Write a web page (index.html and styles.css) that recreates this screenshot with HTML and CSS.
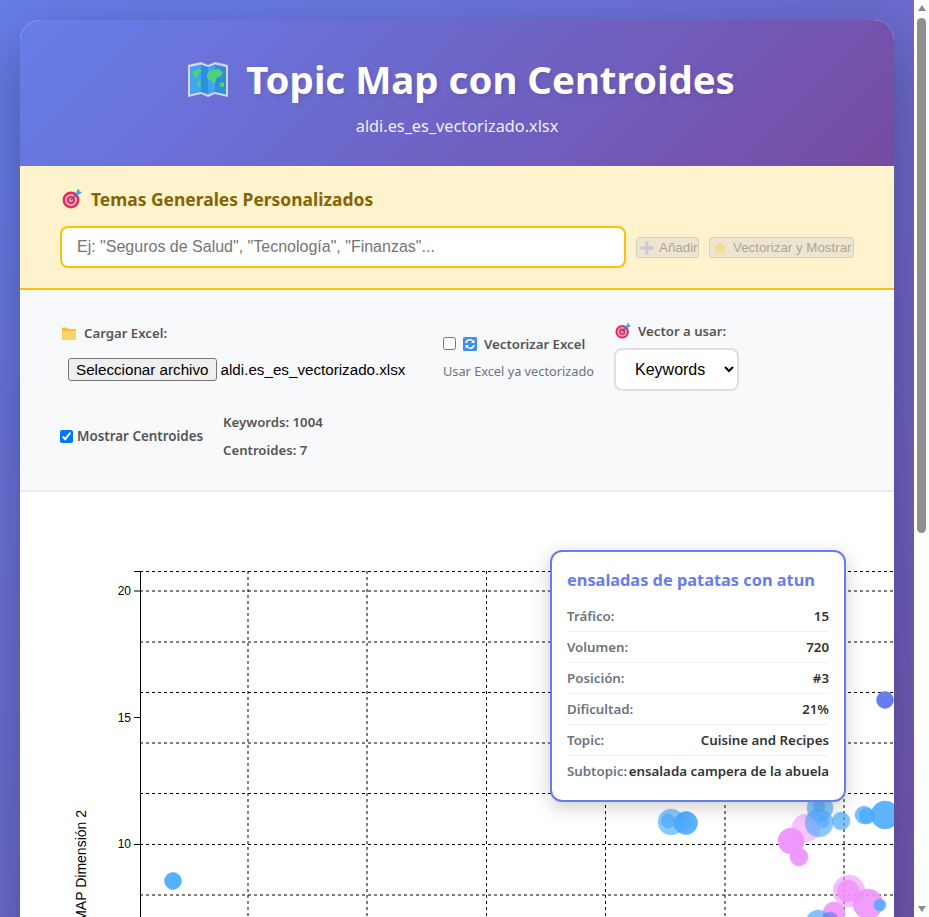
FILE: index.html
```html
<!DOCTYPE html>
<html lang="es">
<head>
  <meta charset="UTF-8">
  <meta name="viewport" content="width=device-width, initial-scale=1.0">
  <title>Topic Map con Centroides</title>
  <link rel="stylesheet" href="styles.css">
</head>
<body>
  <svg class="defs" width="0" height="0" aria-hidden="true">
    <symbol id="ico-target" viewBox="0 0 20 20">
      <circle cx="9" cy="11" r="8.5" fill="#dd2e62"/>
      <circle cx="9" cy="11" r="6" fill="#f4a6bd"/>
      <circle cx="9" cy="11" r="4" fill="#dd2e62"/>
      <circle cx="9" cy="11" r="2" fill="#f4a6bd"/>
      <path d="M9 11 L16 4" stroke="#3b6fb5" stroke-width="1.6"/>
      <path d="M14 5 L15 1 L17 0 L17.5 2.5 L20 3 L18 5 L15 6 Z" fill="#3ea6ee"/>
    </symbol>
  </svg>

  <div class="shell">
    <div class="page">
      <div class="container">
        <header class="header">
          <h1 class="title">
            <svg class="title-ico" viewBox="0 0 42 37" aria-hidden="true">
              <path d="M1 4 L14 1 L21 4 L28 1 L41 4 L41 36 L28 33 L21 36 L14 33 L1 36 Z" fill="#d9d3e6"/>
              <path d="M3 6 L14 3.500 L14 31 L3 33.500 Z" fill="#42a5f0"/>
              <path d="M14 3.500 L21 6 L21 33.500 L14 31 Z" fill="#2f8fdc"/>
              <path d="M21 6 L28 3.500 L28 31 L21 33.500 Z" fill="#42a5f0"/>
              <path d="M28 3.500 L39 6 L39 33.500 L28 31 Z" fill="#2f8fdc"/>
              <path d="M5 11 L12 8 L15 10 L11 13 L11 17 L8 16 L6 14 Z M11 19 L14 21 L13 26 L11 25 Z" fill="#4fd07f"/>
              <path d="M20 13 L24 9 L32 8 L36 12 L33 16 L30 16 L29 20 L26 23 L24 19 L20 18 Z M33 22 L37 21 L37 26 L33 26 Z" fill="#4fd07f"/>
            </svg>
            <span>Topic Map con Centroides</span>
          </h1>
          <p class="subtitle">aldi.es_es_vectorizado.xlsx</p>
        </header>

        <section class="topics">
          <h3 class="topics-title"><svg class="ico-20"><use href="#ico-target"/></svg>Temas Generales Personalizados</h3>
          <div class="topics-row">
            <input class="topics-input" type="text" placeholder="Ej: &quot;Seguros de Salud&quot;, &quot;Tecnología&quot;, &quot;Finanzas&quot;...">
            <button class="btn-off btn-add" disabled>
              <svg class="btn-ico" viewBox="0 0 14 14" aria-hidden="true"><path d="M5.500 0.500 H8.500 V5.500 H13.500 V8.500 H8.500 V13.500 H5.500 V8.500 H0.500 V5.500 H5.500 Z" fill="#d3c3dc"/></svg>
              Añadir
            </button>
            <button class="btn-off btn-vec" disabled>
              <svg class="btn-ico" viewBox="0 0 14 14" aria-hidden="true"><path d="M7 0.500 L9 4.800 L13.800 5.400 L10.200 8.600 L11.200 13.500 L7 11 L2.800 13.500 L3.800 8.600 L0.200 5.400 L5 4.800 Z" fill="#f0dc98" stroke="#f0dc98" stroke-linejoin="round"/></svg>
              Vectorizar y Mostrar
            </button>
          </div>
        </section>

        <section class="controls">
          <div class="controls-row">
            <div class="group group-file">
              <label class="lbl">
                <svg class="ico-folder" viewBox="0 0 14 13" aria-hidden="true">
                  <path d="M0 1.500 Q0 0.500 1 0.500 H5 L6.500 2 H13 Q14 2 14 3 V12 Q14 13 13 13 H1 Q0 13 0 12 Z" fill="#fbc02d"/>
                  <path d="M0 4 H14 V12 Q14 13 13 13 H1 Q0 13 0 12 Z" fill="#ffd26a"/>
                </svg>Cargar Excel:
              </label>
              <div class="file-field">
                <button class="file-btn" type="button">Seleccionar archivo</button>
                <span class="file-name">aldi.es_es_vectorizado.xlsx</span>
              </div>
            </div>

            <div class="group group-vec">
              <label class="lbl">
                <input class="vec-check" type="checkbox">
                <svg class="ico-sync" viewBox="0 0 14 14" aria-hidden="true">
                  <rect width="14" height="14" rx="1.500" fill="#3f8fe8"/>
                  <path d="M3 6 A4 4 0 0 1 10.500 5 M11 8 A4 4 0 0 1 3.500 9" fill="none" stroke="#fff" stroke-width="1.600"/>
                  <path d="M11.500 2.500 V6 H8 Z M2.500 11.500 V8 H6 Z" fill="#fff"/>
                </svg>Vectorizar Excel
              </label>
              <small class="hint">Usar Excel ya vectorizado</small>
            </div>

            <div class="group group-vector">
              <label class="lbl"><svg class="ico-16"><use href="#ico-target"/></svg>Vector a usar:</label>
              <select class="vector-select">
                <option>Keywords</option>
              </select>
            </div>
          </div>

          <div class="controls-row controls-row-b">
            <label class="lbl lbl-centroids"><input class="cent-check" type="checkbox" checked>Mostrar Centroides</label>
            <div class="stats">
              <span>Keywords: 1004</span>
              <span>Centroides: 7</span>
            </div>
          </div>
        </section>

        <section class="chart">
          <svg class="chart-svg" width="874" height="560" viewBox="20 492 874 560" aria-label="UMAP">
            <g class="grid">
              <path d="M140 571.500 H894"/>
              <path d="M140 591 H894"/>
              <path d="M140 642 H894"/>
              <path d="M140 692.500 H894"/>
              <path d="M140 743 H894"/>
              <path d="M140 793.500 H894"/>
              <path d="M140 844.500 H894"/>
              <path d="M140 895 H894"/>
              <path d="M248 571 V1052"/>
              <path d="M367 571 V1052"/>
              <path d="M486.500 571 V1052"/>
              <path d="M605.500 571 V1052"/>
              <path d="M725 571 V1052"/>
              <path d="M844 571 V1052"/>
            </g>
            <path class="axis" d="M134 571.500 H140.500 V1052"/>
            <path class="axis" d="M134 591 H140 M134 717.500 H140 M134 844.500 H140"/>
            <g class="tick-labels">
              <text x="131" y="595">20</text>
              <text x="131" y="722">15</text>
              <text x="131" y="848">10</text>
            </g>
            <text class="axis-title" transform="translate(86,810) rotate(-90)">UMAP Dimensión 2</text>

            <g class="dots-blue">
              <circle cx="173" cy="881" r="8.500" opacity=".95"/>
              <circle cx="671" cy="822" r="13" opacity=".65"/>
              <circle cx="668" cy="821" r="7" opacity=".7"/>
              <circle cx="686" cy="823" r="11.500" opacity=".9"/>
              <circle cx="682" cy="823" r="9" opacity=".7"/>
            </g>
            <g class="dots-pink">
              <circle cx="806" cy="828" r="14" opacity=".55"/>
              <circle cx="791" cy="841" r="13" opacity=".95"/>
              <circle cx="799" cy="857" r="9" opacity=".95"/>
              <circle cx="849" cy="891" r="16" opacity=".6"/>
              <circle cx="848" cy="891" r="11" opacity=".8"/>
              <circle cx="868" cy="904" r="15" opacity=".9"/>
              <circle cx="834" cy="913" r="11" opacity=".9"/>
            </g>
            <g class="dots-blue">
              <circle cx="820" cy="808" r="13" opacity=".65"/>
              <circle cx="819" cy="823" r="14" opacity=".65"/>
              <circle cx="823" cy="822" r="6" opacity=".6"/>
              <circle cx="819" cy="806" r="6" opacity=".6"/>
              <circle cx="841" cy="821" r="9" opacity=".7"/>
              <circle cx="864" cy="815" r="9" opacity=".75"/>
              <circle cx="867" cy="816" r="8" opacity=".8"/>
              <circle cx="885" cy="815" r="14" opacity=".9"/>
              <circle cx="880" cy="905" r="6" opacity=".85"/>
              <circle cx="818" cy="922" r="12" opacity=".7"/>
            </g>
            <circle class="dot-navy dot-faded" cx="830" cy="920" r="8"/>
            <circle class="dot-navy" cx="885" cy="700" r="8.500"/>
          </svg>

          <div class="tooltip">
            <h4 class="tooltip-title">ensaladas de patatas con atun</h4>
            <div class="tip-row"><span class="tip-k">Tráfico:</span><span class="tip-v">15</span></div>
            <div class="tip-row"><span class="tip-k">Volumen:</span><span class="tip-v">720</span></div>
            <div class="tip-row"><span class="tip-k">Posición:</span><span class="tip-v">#3</span></div>
            <div class="tip-row"><span class="tip-k">Dificultad:</span><span class="tip-v">21%</span></div>
            <div class="tip-row"><span class="tip-k">Topic:</span><span class="tip-v">Cuisine and Recipes</span></div>
            <div class="tip-row"><span class="tip-k">Subtopic:</span><span class="tip-v">ensalada campera de la abuela</span></div>
          </div>
        </section>
      </div>
    </div>

    <div class="scrollbar" aria-hidden="true">
      <div class="sb-up"></div>
      <div class="sb-thumb"></div>
      <div class="sb-down"></div>
    </div>
  </div>
</body>
</html>
```

FILE: styles.css
```css
* { box-sizing: border-box; }

html, body { margin: 0; padding: 0; height: 917px; overflow: hidden; }

body {
  font-family: "Noto Sans", "Open Sans", sans-serif;
  color: #333;
}

.defs { position: absolute; }

.shell {
  display: flex;
  height: 917px;
  overflow: hidden;
}

.page {
  flex: 1;
  padding: 20px;
  background: linear-gradient(135deg, #667eea 0%, #764ba2 100%) 0 0 / 914px 1500px no-repeat;
  overflow: hidden;
}

.container {
  background: #fff;
  border-radius: 20px;
  box-shadow: 0 20px 60px rgba(0, 0, 0, .3);
  overflow: hidden;
  height: 1040px;
}

/* header */
.header {
  height: 146px;
  padding-top: 29px;
  text-align: center;
  color: #fff;
  background: linear-gradient(135deg, #667eea 0%, #764ba2 100%);
}

.title {
  display: flex;
  align-items: center;
  justify-content: center;
  gap: 17px;
  margin: 0;
  padding-left: 8px;
  height: 60px;
  font-size: 38.4px;
  font-weight: 700;
  line-height: 60px;
  text-shadow: 2px 2px 4px rgba(0, 0, 0, .1);
}

.title-ico { width: 42px; height: 37px; }

.subtitle {
  margin: 5px 0 0;
  font-size: 16.3px;
  line-height: 24px;
  opacity: .9;
}

/* temas */
.topics {
  height: 124px;
  padding: 23px 40px 0;
  background: #fff3cd;
  border-bottom: 2px solid #ffc107;
}

.topics-title {
  display: flex;
  align-items: center;
  gap: 9px;
  margin: 0 0 17px 2px;
  height: 20px;
  font-size: 17.45px;
  font-weight: 700;
  color: #856404;
}

.ico-20 { width: 20px; height: 20px; }
.ico-16 { width: 16px; height: 16px; margin-right: 7px; }

.topics-row {
  display: flex;
  align-items: center;
  gap: 10px;
}

.topics-input {
  flex: 1;
  height: 42px;
  padding: 0 15px;
  font: 16px "Liberation Sans", Arial, sans-serif;
  background: #fff;
  border: 2px solid #ffc107;
  border-radius: 8px;
  outline: none;
}

.topics-input::placeholder { color: #757575; }

.btn-off {
  display: flex;
  align-items: center;
  gap: 5px;
  height: 21px;
  margin-top: 1px;
  padding: 0 0 0 3px;
  font: 13.33px "Liberation Sans", Arial, sans-serif;
  color: #aea793;
  background: #ece6d1;
  border: 1px solid #d6d0bc;
  border-radius: 3px;
  white-space: nowrap;
  overflow: hidden;
}

.btn-add { width: 63px; }
.btn-vec { width: 145px; gap: 6px; }

.btn-ico { width: 14px; height: 14px; flex: none; }

/* controles */
.controls {
  height: 202px;
  padding: 31px 40px 0;
  background: #f8f9fa;
  border-bottom: 2px solid #e9ecef;
}

.controls-row {
  display: flex;
  align-items: center;
  height: 70px;
}

.controls-row-b {
  height: 50px;
  margin-top: 20px;
}

.group {
  display: flex;
  flex-direction: column;
}

.lbl {
  display: flex;
  align-items: center;
  font-size: 13.2px;
  font-weight: 600;
  line-height: 18px;
  color: #555;
}

.group-file { width: 383px; padding-bottom: 7px; }
.group-vec { width: 171px; padding-top: 2px; }

.ico-folder { width: 14px; height: 13px; margin: 0 8px 0 2px; }
.ico-sync { width: 14px; height: 14px; margin-right: 7px; }

.file-field {
  display: flex;
  align-items: center;
  gap: 4px;
  margin: 16px 0 0 8px;
  font: 15.2px "Liberation Sans", Arial, sans-serif;
  color: #000;
  white-space: nowrap;
}

.file-btn {
  height: 23px;
  padding: 0 7px;
  font: inherit;
  color: #000;
  background: #efefef;
  border: 1px solid #767676;
  border-radius: 3px;
}

.vec-check {
  width: 13px;
  height: 13px;
  margin: 0 7px 0 0;
}

.hint {
  margin-top: 9px;
  font-size: 12.75px;
  line-height: 18px;
  color: #6c757d;
}

.group-vector .lbl { margin: 0 0 8px 1px; }

.vector-select {
  width: 125px;
  height: 43px;
  padding: 0 15px;
  font: 16px "Liberation Sans", Arial, sans-serif;
  color: #000;
  background: #fff;
  border: 2px solid #e0e0e0;
  border-radius: 8px;
  outline: none;
}

.cent-check {
  width: 13px;
  height: 13px;
  margin: 0 4px 0 0;
}

.lbl-centroids { width: 163px; font-size: 13.4px; }

.stats {
  display: flex;
  flex-direction: column;
  gap: 10px;
  font-size: 13.2px;
  font-weight: 600;
  line-height: 18px;
  color: #555;
}

/* grafico */
.chart {
  position: relative;
  height: 560px;
}

.chart-svg { display: block; }

.grid path {
  fill: none;
  stroke: #000;
  stroke-width: 1;
  stroke-dasharray: 3 3;
}

.axis {
  fill: none;
  stroke: #000;
  stroke-width: 1;
}

.tick-labels text {
  font: 12px "Liberation Sans", Arial, sans-serif;
  text-anchor: end;
}

.axis-title {
  font: 14px "Liberation Sans", Arial, sans-serif;
  text-anchor: end;
}

.dots-blue circle {
  fill: #4dabff;
  stroke: rgba(77, 171, 255, .5);
}

.dots-pink circle {
  fill: #f093fb;
  stroke: rgba(240, 147, 251, .5);
}

.dot-navy {
  fill: #667eea;
  stroke: rgba(102, 126, 234, .5);
}

.dot-faded { opacity: .7; }

.tooltip {
  position: absolute;
  left: 530px;
  top: 58px;
  width: 296px;
  height: 252px;
  padding: 15px;
  background: #fff;
  border: 2px solid #667eea;
  border-radius: 12px;
  box-shadow: 0 5px 20px rgba(0, 0, 0, .2);
}

.tooltip-title {
  margin: 0 0 8px;
  font-size: 16.35px;
  font-weight: 700;
  line-height: 26px;
  color: #667eea;
}

.tip-row {
  display: flex;
  justify-content: space-between;
  height: 31px;
  padding-top: 5px;
  font-size: 13.3px;
  font-weight: 600;
  line-height: 20px;
  border-bottom: 1px solid #f0f0f0;
  white-space: nowrap;
}

.tip-row:last-child { border-bottom: 0; }

.tip-k { color: #6c757d; }
.tip-v { color: #333; }

/* barra de scroll */
.scrollbar {
  display: flex;
  flex-direction: column;
  align-items: center;
  width: 15px;
  height: 917px;
  background: #fdfdfd;
}

.sb-up, .sb-down {
  width: 0;
  height: 0;
  border-left: 4.500px solid transparent;
  border-right: 4.500px solid transparent;
}

.sb-up {
  margin-top: 5px;
  border-bottom: 6px solid #8a8a8a;
}

.sb-thumb {
  width: 9px;
  height: 515px;
  margin-top: 7px;
  background: #8f8f8f;
  border-radius: 5px;
}

.sb-down {
  margin-top: auto;
  margin-bottom: 5px;
  border-top: 6px solid #8a8a8a;
}
```
